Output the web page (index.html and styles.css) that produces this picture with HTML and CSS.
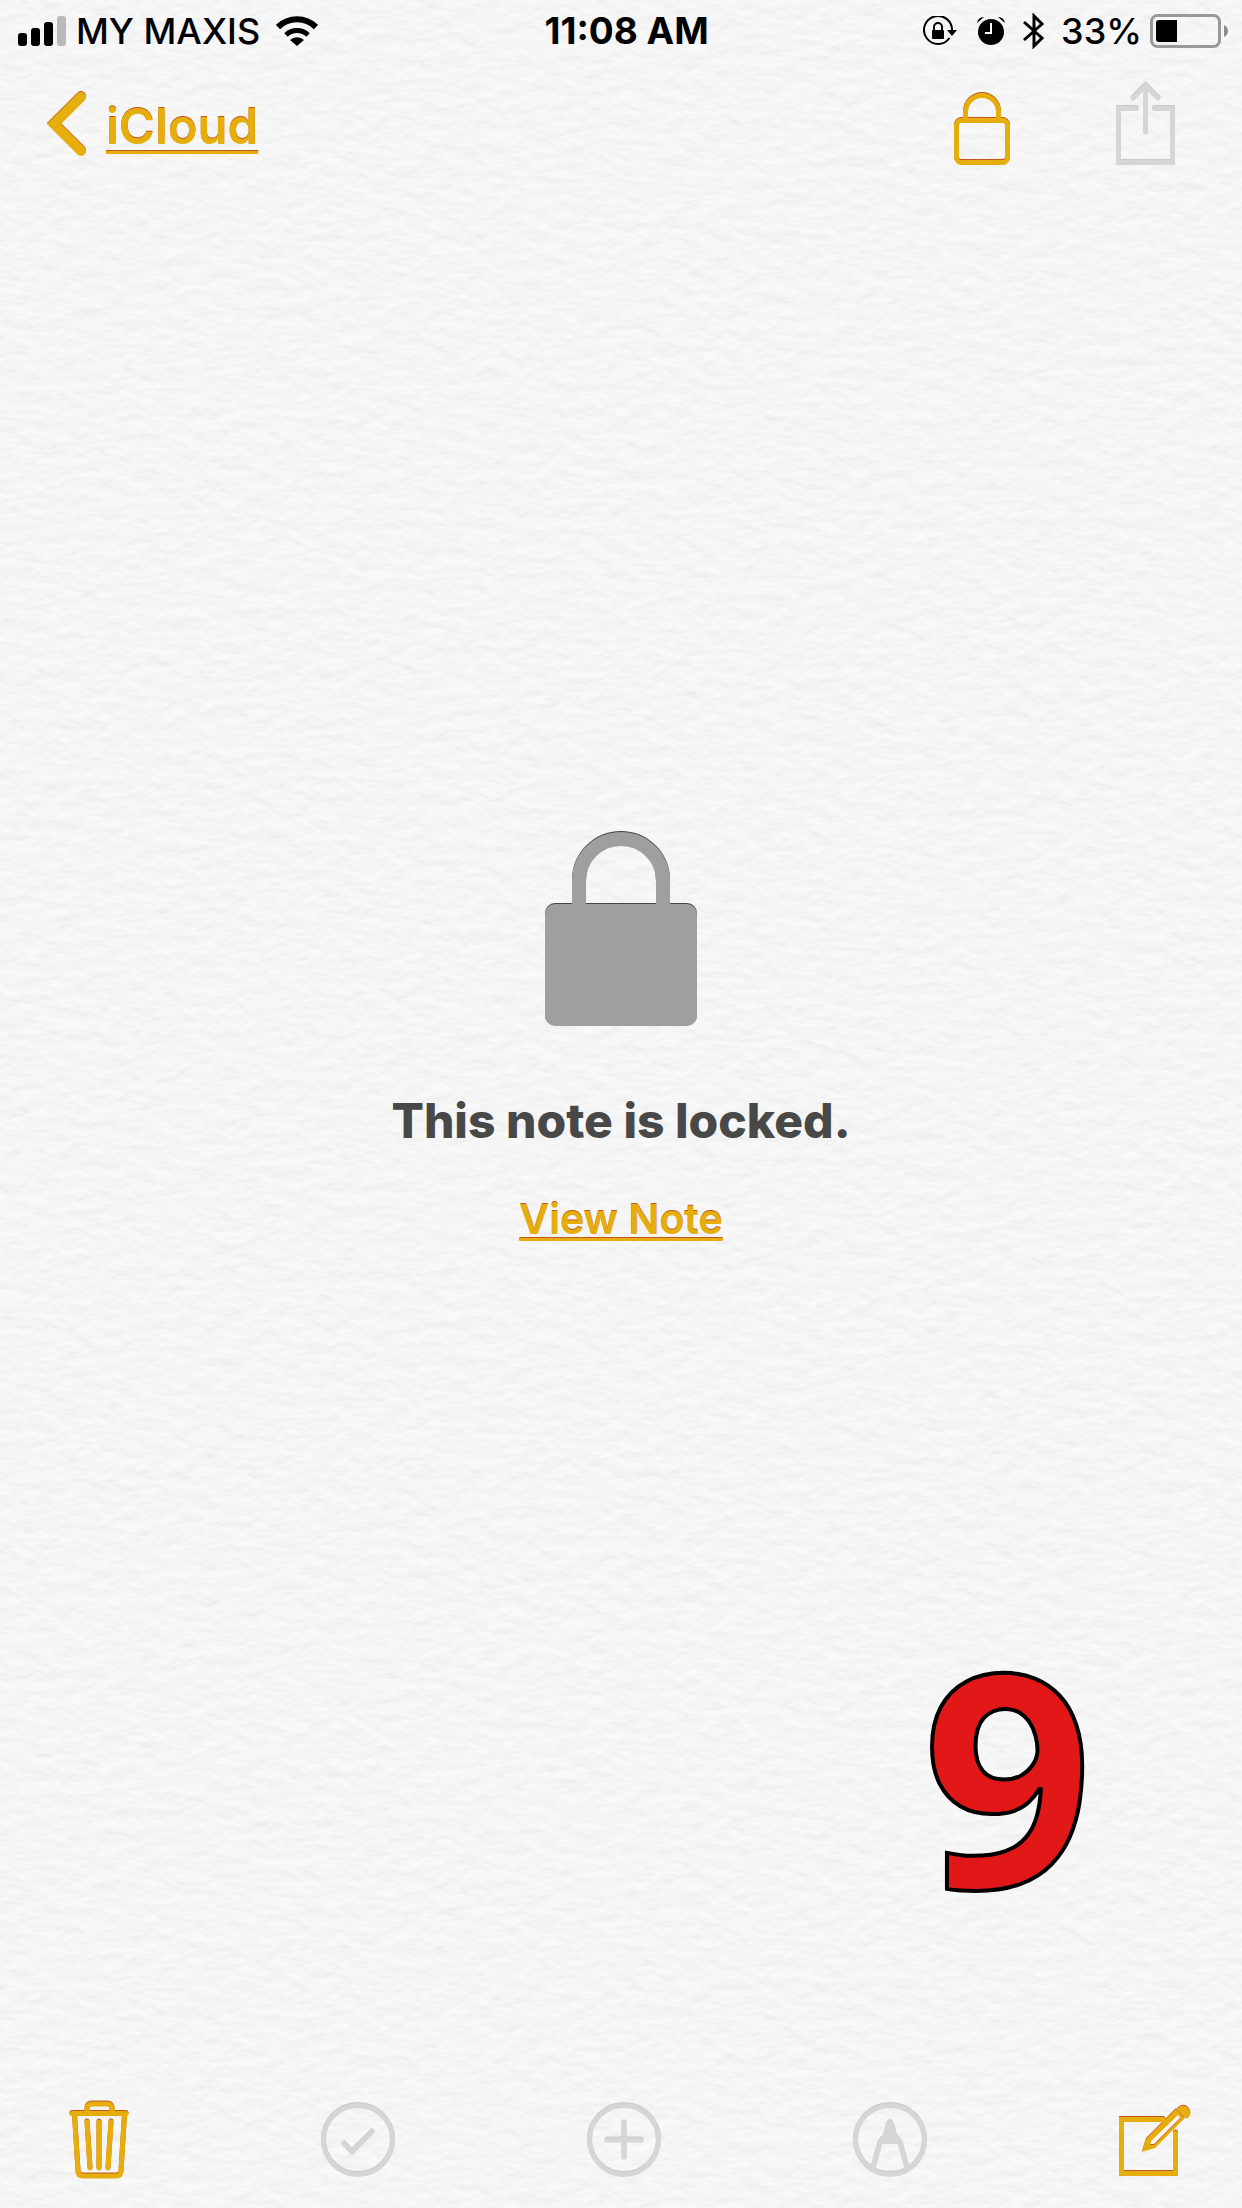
FILE: index.html
```html
<!DOCTYPE html>
<html lang="en">
    <head>
        <meta charset="utf-8">
        <meta name="viewport" content="width=device-width, initial-scale=1">
        <title>Notes</title>
        <link rel="stylesheet" href="styles.css">
    </head>
    <body>
        <svg class="paper" aria-hidden="true">
            <filter id="grain" x="0" y="0" width="100%" height="100%" color-interpolation-filters="sRGB">
                <feTurbulence type="fractalNoise" baseFrequency="0.05 0.08" numOctaves="3" seed="3" result="noise"/>
                <feDiffuseLighting in="noise" lighting-color="#fdfdfd" surfaceScale="0.5" diffuseConstant="1">
                    <feDistantLight azimuth="270" elevation="76"/>
                </feDiffuseLighting>
            </filter>
            <rect width="100%" height="100%" filter="url(#grain)"/>
        </svg>

        <div class="screen">
            <div class="status">
                <div class="status-left">
                    <svg width="48" height="30" viewBox="0 0 48 30">
                        <rect x="0" y="17" width="9" height="13" rx="3"/>
                        <rect x="13" y="12" width="9" height="18" rx="3"/>
                        <rect x="26" y="6" width="9" height="24" rx="3"/>
                        <rect x="39" y="0" width="9" height="30" rx="3" fill="#b9b9b9"/>
                    </svg>
                    <span class="carrier">MY MAXIS</span>
                    <svg width="42" height="30" viewBox="0 0 42 30">
                        <path d="M2 11a27 27 0 0 1 38 0" fill="none" stroke="#000" stroke-width="6"/>
                        <path d="M10 19a16 16 0 0 1 22 0" fill="none" stroke="#000" stroke-width="5"/>
                        <path d="M14 24a10 10 0 0 1 14 0l-7 6z"/>
                    </svg>
                </div>
                <span class="time">11:08 AM</span>
                <div class="status-right">
                    <svg width="34" height="30" viewBox="0 0 34 30">
                        <path d="M26.500 22A14 14 0 1 1 29 15" fill="none" stroke="#000" stroke-width="2"/>
                        <path d="M24 14h10l-5 6z"/>
                        <rect x="9" y="14" width="12" height="9" rx="1"/>
                        <path d="M11 15v-4a4 4 0 0 1 8 0v4" fill="none" stroke="#000" stroke-width="2"/>
                    </svg>
                    <svg class="alarm" width="28" height="28" viewBox="0 0 28 28">
                        <circle cx="14" cy="15" r="13"/>
                        <path d="M0 6q1-6 7-6zM28 6q-1-6-7-6z"/>
                        <path d="M14 6v10H8" fill="none" stroke="#fff" stroke-width="2"/>
                    </svg>
                    <svg class="bluetooth" width="22" height="36" viewBox="0 0 22 36">
                        <path d="M1 9l18 16-8 8V3l8 8L1 27" fill="none" stroke="#000" stroke-width="3"/>
                    </svg>
                    <span class="percent">33%</span>
                    <svg width="78" height="34" viewBox="0 0 78 34">
                        <rect x="1.500" y="1.500" width="68" height="31" rx="6" fill="none" stroke="#999" stroke-width="3"/>
                        <path d="M9 6h18v22H9q-3 0-3-3V9q0-3 3-3z"/>
                        <path d="M74 11q4 2 4 6t-4 6z" fill="#8c8c8c"/>
                    </svg>
                </div>
            </div>

            <header class="nav">
                <a href="#" class="back">
                    <svg class="gold" width="40" height="66" viewBox="0 0 40 66">
                        <path d="M34 6L7 33l27 27" stroke-width="10"/>
                    </svg>
                    <span class="back-text">iCloud</span>
                </a>
                <div class="nav-buttons">
                    <button type="button" aria-label="Lock note">
                        <svg class="gold" width="56" height="72" viewBox="0 0 56 72">
                            <rect x="2.500" y="27.500" width="51" height="42" rx="5"/>
                            <path d="M11.500 27V19a16.500 16.500 0 0 1 33 0v8"/>
                        </svg>
                    </button>
                    <button type="button" aria-label="Share" disabled>
                        <svg class="grey" width="59" height="83" viewBox="0 0 59 83">
                            <path d="M20.500 26.500h-18v54h54v-54h-18"/>
                            <path d="M29.500 50V4M17 16L29.500 3.500 42 16"/>
                        </svg>
                    </button>
                </div>
            </header>

            <main class="locked">
                <svg class="padlock" width="152" height="195" viewBox="0 0 152 195">
                    <rect x="0" y="73" width="152" height="122" rx="10"/>
                    <path d="M34 76V50a42 42 0 0 1 84 0v26" fill="none" stroke="#9f9f9f" stroke-width="14"/>
                </svg>
                <h1>This note is locked.</h1>
                <a href="#" class="view">View Note</a>
                <span class="step">9</span>
            </main>

            <footer class="toolbar">
                <button type="button" aria-label="Delete">
                    <svg class="gold" width="60" height="78" viewBox="0 0 60 78">
                        <path d="M3 12.500h54"/>
                        <path d="M18 11V8q0-5 5-5h15q5 0 5 5v3"/>
                        <path d="M5.500 14l3.500 56q0 5 5 5h33q5 0 5-5l3.500-56"/>
                        <path d="M18 21l3 46M30 21v46M42 21l-3 46"/>
                    </svg>
                </button>
                <button type="button" aria-label="Checklist" disabled>
                    <svg class="grey" width="74" height="74" viewBox="0 0 74 74">
                        <circle cx="37" cy="37" r="34.500"/>
                        <path d="M23 41l8 8 20-20"/>
                    </svg>
                </button>
                <button type="button" aria-label="Add" disabled>
                    <svg class="grey" width="74" height="74" viewBox="0 0 74 74">
                        <circle cx="37" cy="37" r="34.500"/>
                        <path d="M37 20v34M20 37h34"/>
                    </svg>
                </button>
                <button type="button" aria-label="Sketch" disabled>
                    <svg class="grey" width="74" height="74" viewBox="0 0 74 74">
                        <circle cx="37" cy="37" r="34.500"/>
                        <path d="M20 65l7-25 3-4M54 65l-7-25-3-4"/>
                        <path class="solid" d="M28 41l5-20q4-8 8 0l5 20z"/>
                    </svg>
                </button>
                <button type="button" aria-label="New note">
                    <svg class="gold" width="71" height="71" viewBox="0 0 71 71">
                        <path d="M44 14.500H2.500v54h54V28"/>
                        <path class="solid" fill-rule="evenodd" d="M23 47l4-13L57 4l9 9L36 43zM32 36l-1 4 4 0 27-27-3-3z"/>
                        <path class="solid" d="M58 4q6-6 11-1 5 6-1 11z"/>
                    </svg>
                </button>
            </footer>
        </div>
    </body>
</html>
```

FILE: styles.css
```css
* {
    box-sizing: border-box;
}
body {
    margin: 0;
    background-color: #f8f8f8;
    font-family: Inter, "Liberation Sans", sans-serif;
    color: #000;
}
.paper {
    position: absolute;
    top: 0;
    left: 0;
    width: 100%;
    height: 100%;
}
.screen {
    position: relative;
    display: flex;
    flex-direction: column;
    min-height: 100vh;
}
svg {
    display: block;
    flex: none;
}
button {
    padding: 0;
    border: none;
    background: none;
    cursor: pointer;
}

/* status bar */
.status {
    display: flex;
    justify-content: space-between;
    align-items: center;
    height: 60px;
    padding: 2px 14px 0 18px;
    font-size: 36px;
    line-height: 44px;
    font-weight: 500;
}
.status-left, .status-right {
    display: flex;
    align-items: center;
}
.carrier {
    margin: 0 16px 0 10px;
}
.time {
    padding-left: 12px;
    font-size: 37px;
    font-weight: 700;
}
.alarm {
    margin-left: 20px;
}
.bluetooth {
    margin-left: 18px;
}
.percent {
    margin: 0 8px 0 16px;
}

/* icons that look pressed into the paper */
.gold, .grey {
    fill: none;
    stroke-width: 5px;
    stroke-linecap: round;
    overflow: visible;
}
.gold {
    stroke: #e5ae0d;
    filter: drop-shadow(0 -1px 0 #c4571c);
}
.grey {
    stroke: #d6d6d6;
    filter: drop-shadow(0 -1px 0 #c9c9c9);
}
.gold .solid {
    fill: #e5ae0d;
    stroke: none;
}
.grey .solid {
    fill: #d6d6d6;
    stroke: none;
}

/* top navigation */
.nav {
    display: flex;
    justify-content: space-between;
    align-items: center;
    height: 126px;
    padding: 0 67px 0 47px;
}
.back {
    display: flex;
    align-items: center;
    gap: 19px;
    padding-top: 2px;
    text-decoration: none;
}
.back-text, .view {
    color: #e5ae0d;
    text-shadow: 0 -1px 0 #c4571c;
    font-weight: 600;
    text-decoration: underline;
    text-decoration-thickness: 3px;
    text-decoration-skip-ink: none;
}
.back-text {
    padding-top: 6px;
    font-size: 49px;
    line-height: 62px;
    text-underline-offset: 7px;
}
.nav-buttons {
    display: flex;
    align-items: flex-end;
    gap: 106px;
}

/* locked note */
.locked {
    position: relative;
    flex: 1;
    display: flex;
    flex-direction: column;
    align-items: center;
    justify-content: center;
    padding-bottom: 184px;
}
.padlock {
    fill: #9f9f9f;
    filter: drop-shadow(0 -1px 0 #444);
}
h1 {
    margin: 66px 0 44px;
    color: #484848;
    font-size: 48px;
    line-height: 58px;
    font-weight: 800;
}
.view {
    font-size: 41px;
    line-height: 50px;
    text-underline-offset: 4px;
}
.step {
    position: absolute;
    right: 12%;
    bottom: 150px;
    color: #e21818;
    font-family: "Noto Sans", "Open Sans", sans-serif;
    font-size: 298px;
    line-height: 300px;
    font-weight: 700;
    -webkit-text-stroke: 4px #000;
}

/* bottom toolbar */
.toolbar {
    display: flex;
    justify-content: space-between;
    align-items: center;
    height: 136px;
    padding: 0 52px 0 69px;
}
```
